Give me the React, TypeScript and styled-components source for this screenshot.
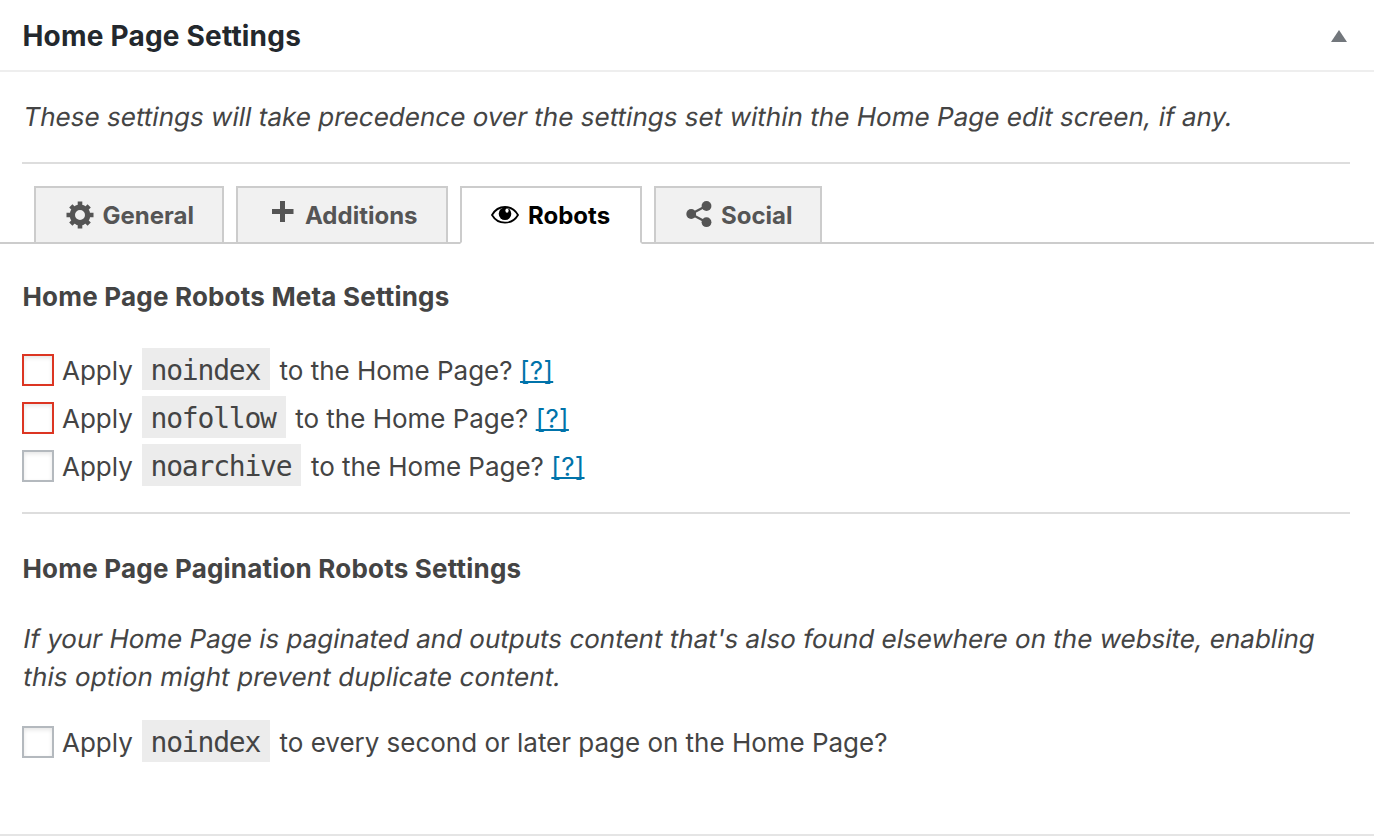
import React from "react";
import styled, { createGlobalStyle } from "styled-components";

const Global = createGlobalStyle`
  *, *::before, *::after { box-sizing: border-box; }
  body { margin: 0; background: #fff; }
`;

const Panel = styled.section`
  height: 836px;
  border-bottom: 2px solid #e5e5e5;
  background: #fff;
  color: #444;
  font: 400 26px/38px Inter, "Liberation Sans", sans-serif;
  overflow: hidden;
`;

const Header = styled.header`
  display: flex;
  align-items: center;
  justify-content: space-between;
  height: 72px;
  padding: 2px 27px 0 22.500px;
  border-bottom: 2px solid #eee;
`;

const Title = styled.h2`
  margin: 0;
  color: #23282d;
  font-size: 28px;
  font-weight: 700;
  line-height: 38px;
  letter-spacing: 0.2px;
  white-space: nowrap;
`;

const Note = styled.p<{ $top: number }>`
  margin: 0;
  padding: ${(p) => p.$top}px 0 0 22px;
`;

const Slanted = styled.span<{ $spacing?: number }>`
  display: block;
  white-space: nowrap;
  letter-spacing: ${(p) => p.$spacing ?? 0}px;
  transform: skewX(-10deg);
  transform-origin: 0 75%;
`;

const Rule = styled.hr<{ $top: number }>`
  height: 2px;
  margin: ${(p) => p.$top}px 24px 0 22px;
  border: 0;
  background: #ddd;
`;

const Tabs = styled.nav`
  display: flex;
  gap: 12px;
  height: 58px;
  margin-top: 22px;
  padding-left: 34px;
  box-shadow: inset 0 -2px #ccc;
`;

const Tab = styled.button<{ $width: number; $active?: boolean; $inset?: number }>`
  display: flex;
  align-items: center;
  width: ${(p) => p.$width}px;
  height: 58px;
  padding: 0 0 0 ${(p) => p.$inset ?? 29}px;
  border: 2px solid #ccc;
  border-bottom-color: ${(p) => (p.$active ? "#fff" : "#ccc")};
  background: ${(p) => (p.$active ? "#fff" : "#f1f1f1")};
  color: ${(p) => (p.$active ? "#000" : "#555")};
  font: 700 24px/38px Inter, "Liberation Sans", sans-serif;
  white-space: nowrap;

  svg { flex: none; margin-right: 9px; }
  span { padding-top: 1px; }
`;

const Heading = styled.h4<{ $top: number }>`
  margin: ${(p) => p.$top}px 0 0 22.500px;
  font-size: 26px;
  font-weight: 700;
  line-height: 38px;
  letter-spacing: 0.2px;
`;

const Options = styled.div<{ $top: number }>`
  display: flex;
  flex-direction: column;
  gap: 6px;
  margin: ${(p) => p.$top}px 0 0 22px;
`;

const Option = styled.label`
  display: flex;
  align-items: center;
  height: 42px;
  white-space: nowrap;
`;

const Box = styled.input<{ $alert?: boolean }>`
  appearance: none;
  flex: none;
  width: 32px;
  height: 32px;
  margin: 2px 8px 0 0;
  border: 2px solid ${(p) => (p.$alert ? "#dc3522" : "#b4b9be")};
  background: #fff;
  box-shadow: inset 0 2px 4px rgba(0, 0, 0, 0.1);
`;

const Word = styled.span`
  width: 80px;
  padding-top: 3px;
`;

const Code = styled.code`
  height: 42px;
  margin-right: 9.500px;
  padding: 0 10px 0 8.500px;
  background: #ececec;
  font: 400 28px/46px "DejaVu Sans Mono", monospace;
  letter-spacing: -1.2px;
`;

const Rest = styled.span`
  padding-top: 3px;
  letter-spacing: -0.02px;
`;

const Help = styled.a`
  margin-left: 7.500px;
  padding-top: 3px;
  color: #0073aa;
  letter-spacing: 0.3px;
  text-decoration: underline;
  text-decoration-thickness: 2px;
  text-decoration-skip-ink: none;
`;

const Gear = () => (
  <svg width="28" height="28" viewBox="-14 -14 28 28" fill="currentColor">
    {[0, 90].map((a) => (
      <path key={a} d="M-2.300-13.500h4.600v6h-4.600zM-2.300 7.500h4.600v6h-4.600z" transform={`rotate(${a})`} />
    ))}
    {[45, 135].map((a) => (
      <path key={a} d="M-2.300-13h4.600v6h-4.600zM-2.300 7h4.600v6h-4.600z" transform={`rotate(${a})`} />
    ))}
    <circle r="7.700" fill="none" stroke="currentColor" strokeWidth="5.400" />
  </svg>
);

const Plus = () => (
  <svg width="29" height="28" viewBox="0 0 29 28" fill="currentColor">
    <path d="M13 0h5v8h8.500v5H18v8h-5v-8H5V8h8z" />
  </svg>
);

const Eye = () => (
  <svg width="28" height="20" viewBox="0 0 28 20">
    <path d="M1 10C7-0.700 21-0.700 27 10C21 20.200 7 20.200 1 10Z" fill="none" stroke="currentColor" strokeWidth="1.800" />
    <circle cx="14" cy="8.800" r="6.300" fill="currentColor" />
    <ellipse cx="16" cy="5.600" rx="1.600" ry="2.200" fill="#fff" />
  </svg>
);

const Share = () => (
  <svg width="26" height="28" viewBox="0 0 26 28" fill="currentColor">
    <path d="M20 5L5 13l15 8" fill="none" stroke="currentColor" strokeWidth="2.300" />
    <circle cx="20.500" cy="5" r="4.900" />
    <circle cx="5.200" cy="13" r="4.900" />
    <circle cx="20.500" cy="21.200" r="4.900" />
  </svg>
);

const Arrow = () => (
  <svg width="16" height="12" viewBox="0 0 16 12">
    <path d="M8 0l8 12H0z" fill="#72777c" />
  </svg>
);

const robots = [
  { code: "noindex", alert: true },
  { code: "nofollow", alert: true },
  { code: "noarchive", alert: false },
];

export default function App() {
  return (
    <Panel>
      <Global />
      <Header>
        <Title>Home Page Settings</Title>
        <Arrow />
      </Header>
      <Note $top={26}>
        <Slanted $spacing={0.025}>These settings will take precedence over the settings set within the Home Page edit screen, if any.</Slanted>
      </Note>
      <Rule $top={26} />
      <Tabs>
        <Tab $width={190} $inset={29.5}><Gear /><span>General</span></Tab>
        <Tab $width={212}><Plus /><span>Additions</span></Tab>
        <Tab $width={182} $active><Eye /><span>Robots</span></Tab>
        <Tab $width={168} $inset={30}><Share /><span>Social</span></Tab>
      </Tabs>
      <Heading $top={34}>Home Page Robots Meta Settings</Heading>
      <Options $top={32}>
        {robots.map((r) => (
          <Option key={r.code}>
            <Box type="checkbox" $alert={r.alert} />
            <Word>Apply</Word>
            <Code>{r.code}</Code>
            <Rest>to the Home Page?</Rest>
            <Help>[?]</Help>
          </Option>
        ))}
      </Options>
      <Rule $top={26} />
      <Heading $top={36}>Home Page Pagination Robots Settings</Heading>
      <Note $top={32}>
        <Slanted>If your Home Page is paginated and outputs content that's also found elsewhere on the website, enabling</Slanted>
        <Slanted $spacing={0.1}>this option might prevent duplicate content.</Slanted>
      </Note>
      <Options $top={24}>
        <Option>
          <Box type="checkbox" />
          <Word>Apply</Word>
          <Code>noindex</Code>
          <Rest>to every second or later page on the Home Page?</Rest>
        </Option>
      </Options>
    </Panel>
  );
}
